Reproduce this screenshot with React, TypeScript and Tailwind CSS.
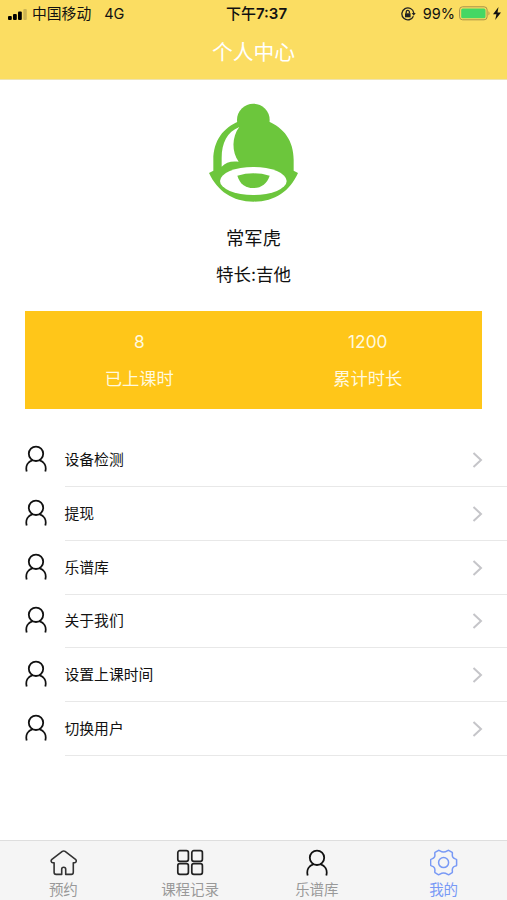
import React from 'react';

const menu = ['设备检测', '提现', '乐谱库', '关于我们', '设置上课时间', '切换用户'];

function Person({ className }: { className?: string }) {
  return (
    <svg className={className} width="22" height="28" viewBox="0 0 22 28" fill="none" stroke="currentColor" strokeWidth="1.8">
      <circle cx="11" cy="8.800" r="7.200" />
      <path d="M1.700 26.600C.2 20.800 3 16.700 7.700 15.100M20.300 26.600C21.800 20.800 19 16.700 14.300 15.100" />
    </svg>
  );
}

function Avatar() {
  return (
    <svg width="130" height="125" viewBox="-2 -2 390 375" fill="#6cc63c">
      <circle cx="191" cy="88" r="49" />
      <path d="M71 240V208C71 150 101 111 148 92H235C282 111 312 150 312 208V240L325 247C301 301 256 333 192 333C129 333 83 301 58 247Z" />
      <path d="M149 109C112 124 96 157 96 202V228C108 215 125 210 147 213C126 184 126 138 149 109Z" fill="#fff" />
      <ellipse cx="191" cy="271" rx="100" ry="42" fill="#fff" />
      <path d="M143 255Q191 241 240 255C232 279 215 292 191 292C167 292 150 279 143 255Z" />
    </svg>
  );
}

function Home() {
  return (
    <svg width="28" height="28" viewBox="-1 0 28 28" fill="none" stroke="#333" strokeWidth="1.6" strokeLinejoin="round">
      <path d="M12.300 2.400 1.900 10.300C.6 11.400 1 13.600 2.800 13.700H4.100V23.300Q4.100 25.400 6.100 25.400H11.700V20.300Q11.700 18.300 13.700 18.300T15.700 20.300V25.400H21.300Q23.300 25.400 23.300 23.300V13.700H24.600C26.400 13.600 26.800 11.400 25.500 10.300L15.100 2.400Q13.700 1.500 12.300 2.400Z" />
    </svg>
  );
}

function Grid() {
  return (
    <svg width="28" height="28" viewBox="0 0 28 28" fill="none" stroke="#222" strokeWidth="1.700">
      <rect x="1.800" y="1.700" width="10.600" height="10.600" rx="2" />
      <rect x="15.800" y="1.700" width="10.600" height="10.600" rx="2" />
      <rect x="1.800" y="14.700" width="10.600" height="10.600" rx="2" />
      <rect x="15.800" y="14.700" width="10.600" height="10.600" rx="2" />
    </svg>
  );
}

function Gear() {
  return (
    <svg width="28" height="28" viewBox="0.4 0 28 28" fill="none" stroke="currentColor" strokeWidth="1.500" strokeLinejoin="round">
      <path d="M9 1.300C10.300 1.300 10.900 3 14 3S17.700 1.300 19 1.300L22.600 3.400C23.300 4.600 22 6.200 23.200 8.200S26.400 9.600 27 10.700V16.300C26.400 17.400 24.400 16.900 23.200 18.900S23.300 22.600 22.600 23.700L19 25.800C17.700 25.800 17.100 24.100 14 24.100S10.300 25.800 9 25.800L5.400 23.700C4.700 22.500 6 20.900 4.800 18.900S1.600 17.400 1 16.300V10.700C1.600 9.600 3.600 10.200 4.800 8.200S4.700 4.500 5.400 3.400Z" />
      <circle cx="14" cy="13.600" r="5" />
    </svg>
  );
}

export default function App() {
  return (
    <div className="flex h-[900px] w-[507px] flex-col overflow-hidden bg-white font-[Inter,'Noto_Sans_CJK_SC',sans-serif] text-[#111]">
      <header className="h-20 border-b border-[#eee3b2] bg-[#fbdd62]">
        <div className="grid h-7 grid-cols-3 items-center pl-2 pr-1.5 text-[14.500px] leading-7">
          <div className="flex items-center">
            <svg width="19" height="11" viewBox="0 0 19 11">
              <rect y="7" width="3.800" height="4" rx="1" />
              <rect x="5" y="5" width="3.800" height="6" rx="1" />
              <rect x="10" y="2.500" width="3.800" height="8.500" rx="1" />
              <rect x="15.300" width="3.500" height="11" rx="1" fill="#cdb553" />
            </svg>
            <span className="ml-[5px] text-[14.800px]">中国移动</span>
            <span className="ml-[13px]">4G</span>
          </div>
          <div className="pl-1 text-center text-[15px] font-semibold">
            <span className="font-medium">下午</span>7:37
          </div>
          <div className="flex items-center justify-end">
            <svg width="15" height="14" viewBox="0 0 15 14" fill="none" stroke="#222" strokeWidth="1.300">
              <path d="M12.400 9.200A6 6 0 1 1 12.800 6" />
              <path d="M10.700 6h4l-2 2.800Z" fill="#222" stroke="none" />
              <rect x="4" y="6.300" width="5.600" height="4" fill="#222" stroke="none" />
              <path d="M5.200 6.500V5a1.600 1.600 0 0 1 3.200 0v1.500" />
            </svg>
            <span className="ml-[7px]">99%</span>
            <svg className="-mt-0.5 ml-1" width="32" height="15" viewBox="0 0 32 15">
              <rect x=".6" y=".8" width="27.500" height="13" rx="3" fill="none" stroke="#a79149" />
              <rect x="2.200" y="2.400" width="24.300" height="9.800" rx="1.500" fill="#45d764" />
              <path d="M29.500 5q2 2.300 0 4.600Z" fill="#a79149" />
            </svg>
            <svg className="-mt-0.5 ml-0.5" width="8" height="13" viewBox="0 0 8 13">
              <path d="M5.500 0 0 7.200h3.400L2.200 13 8 5.500H4.500Z" fill="#111" />
            </svg>
          </div>
        </div>
        <h1 className="pt-px text-center text-[20.800px] leading-12 text-white">个人中心</h1>
      </header>

      <section className="flex flex-col items-center pt-[10px] text-[18.300px]">
        <Avatar />
        <div className="mt-[5px] h-[37px] leading-[37px]">常军虎</div>
        <div className="h-[37px] text-[17.500px] leading-[36px]">特长:吉他</div>
      </section>

      <section className="mx-[25px] mt-[17px] grid h-[98px] grid-cols-2 content-center bg-[#ffc619] text-center text-[17.300px] leading-[37px] text-[#fff9df]">
        <div>8</div>
        <div>1200</div>
        <div>已上课时</div>
        <div>累计时长</div>
      </section>

      <section className="mt-[24.500px]">
        {menu.map((label) => (
          <div key={label} className="flex h-[53.700px] items-center pl-[25px]">
            <Person className="mb-0.5" />
            <div className="ml-[17.500px] flex h-full flex-1 items-center justify-between border-b border-[#e8e8e8] pr-6 pt-px text-[14.800px]">
              <span>{label}</span>
              <svg width="11" height="16" viewBox="0 0 11 16" fill="none" stroke="#c5c5c9" strokeWidth="2">
                <path d="m1.500 1 7.500 7-7.500 7" />
              </svg>
            </div>
          </div>
        ))}
      </section>

      <nav className="mt-auto grid h-[60px] grid-cols-4 border-t border-[#dedede] bg-[#f5f5f5] text-[14.500px] text-[#999]">
        <div className="flex flex-col items-center pt-2">
          <Home />
          <span className="leading-[26px]">预约</span>
        </div>
        <div className="flex flex-col items-center pt-2">
          <Grid />
          <span className="leading-[26px]">课程记录</span>
        </div>
        <div className="flex flex-col items-center pt-2">
          <Person className="text-[#111]" />
          <span className="leading-[26px]">乐谱库</span>
        </div>
        <div className="flex flex-col items-center pt-2 text-[#7899f5]">
          <Gear />
          <span className="leading-[26px]">我的</span>
        </div>
      </nav>
    </div>
  );
}
